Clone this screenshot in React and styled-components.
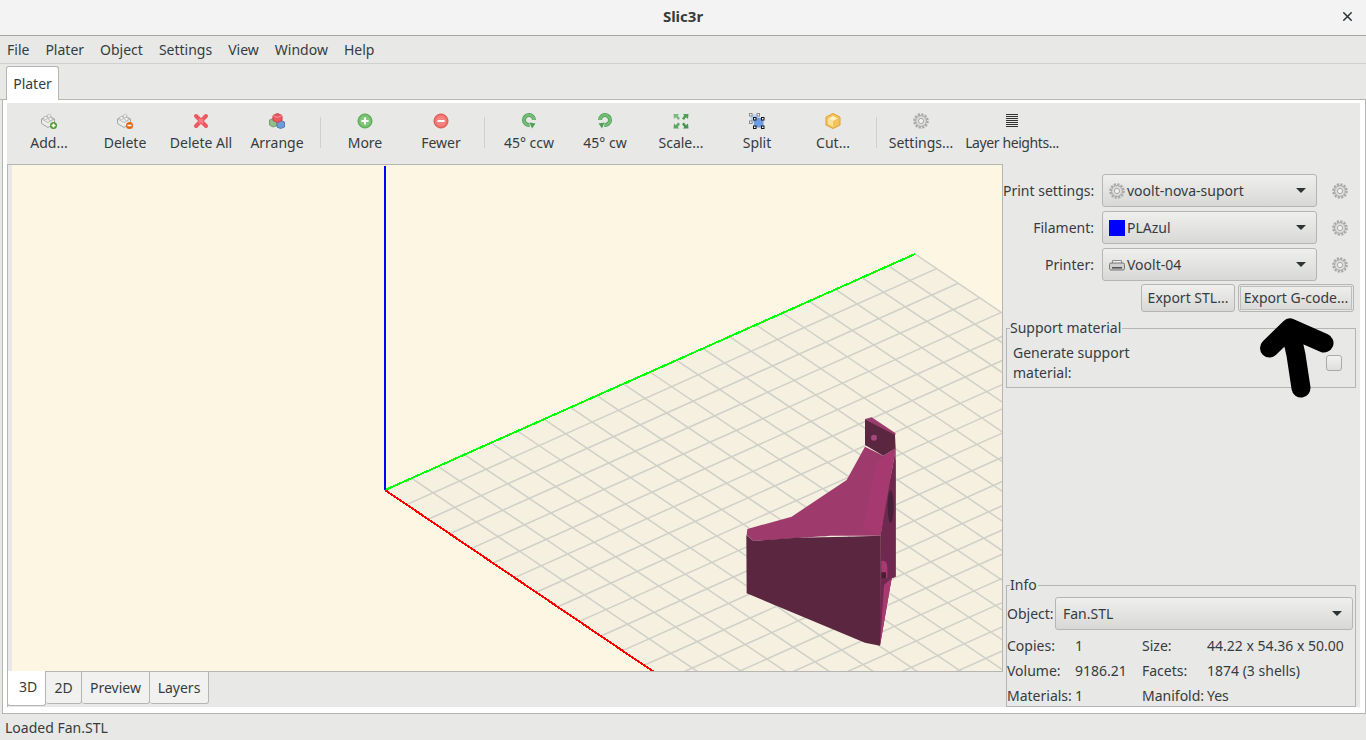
import React from 'react';
import styled, { createGlobalStyle } from 'styled-components';
import { X } from 'lucide-react';

const GlobalStyle = createGlobalStyle`
    html, body {
        margin: 0;
        padding: 0;
        background: #e8e8e7;
        overflow: hidden;
    }
    * {
        box-sizing: border-box;
    }
`;

const Window = styled.div`
    position: relative;
    width: 1366px;
    height: 740px;
    overflow: hidden;
    display: flex;
    flex-direction: column;
    background: #e8e8e7;
    color: #363c3e;
    font-family: "Noto Sans", sans-serif;
    font-size: 14px;
`;
const TitleBar = styled.div`
    height: 36px;
    flex: none;
    display: grid;
    grid-template-columns: 1fr auto 1fr;
    align-items: center;
    background: #f3f3f3;
    border-bottom: 1px solid #a3a3a0;
`;
const Title = styled.span`
    grid-column: 2;
    font-size: 15px;
    font-weight: 700;
    margin-top: -3px;
`;
const CloseBox = styled.div`
    justify-self: end;
    display: flex;
    margin: -3px 11px 0 0;
`;
const MenuBar = styled.div`
    height: 28px;
    flex: none;
    display: flex;
    align-items: center;
    gap: 16px;
    padding: 0 0 1px 7px;
    border-bottom: 1px solid #d0d0ce;
`;
const MenuItem = styled.span`
    color: inherit;
`;
const TabHead = styled.div`
    height: 36px;
    flex: none;
    display: flex;
    align-items: flex-end;
    padding-left: 6px;
    border-bottom: 1px solid #b5b5b3;
`;
const TopTab = styled.div`
    width: 53px;
    height: 34px;
    margin-bottom: -1px;
    display: flex;
    align-items: center;
    justify-content: center;
    background: #ffffff;
    border: 1px solid #b5b5b3;
    border-bottom: none;
    border-radius: 3px 3px 0 0;
`;
const Notebook = styled.div`
    height: 614px;
    flex: none;
    margin-left: 2px;
    padding: 3px 5px 6px 4px;
    display: flex;
    flex-direction: column;
    background: #ffffff;
    border: 1px solid #b5b5b3;
    border-top: none;
`;
const StatusBar = styled.div`
    flex: 1;
    display: flex;
    align-items: center;
    padding-left: 5px;
`;
const Panel = styled.div`
    flex: 1;
    min-height: 0;
    display: flex;
    flex-direction: column;
    background: #e8e8e7;
`;
const Toolbar = styled.div`
    height: 61px;
    flex: none;
    display: flex;
    padding-left: 4px;
`;
const ToolButton = styled.div`
    width: ${(p) => p.$width || 76}px;
    flex: none;
    display: flex;
    flex-direction: column;
    align-items: center;
    padding-top: 10px;
`;
const ToolIcon = styled.div`
    width: 16px;
    height: 16px;
    display: flex;
    align-items: center;
    justify-content: center;
`;
const ToolLabel = styled.span`
    line-height: 20px;
    margin-top: 4px;
    white-space: nowrap;
    letter-spacing: ${(p) => p.$spacing || 0}px;
`;
const ToolSeparator = styled.div`
    width: 1px;
    height: 31px;
    flex: none;
    margin: 14px 6px 0 5px;
    background: #cfcfcd;
`;
const Main = styled.div`
    flex: 1;
    min-height: 0;
    display: flex;
`;
const ViewColumn = styled.div`
    width: 996px;
    flex: none;
    display: flex;
    flex-direction: column;
    border-top: 1px solid #b5b5b3;
    border-left: 1px solid #b5b5b3;
`;
const CanvasFrame = styled.div`
    height: 507px;
    flex: none;
    padding-left: 4px;
    border-right: 1px solid #b5b5b3;
    border-bottom: 1px solid #b5b5b3;
`;
const Canvas = styled.svg`
    display: block;
    width: 990px;
    height: 506px;
    background: #fdf6e3;
`;
const ViewTabs = styled.div`
    display: flex;
    align-items: flex-start;
    margin: -1px 0 0 -1px;
`;
const ViewTab = styled.div`
    height: ${(p) => (p.$active ? 35 : 33)}px;
    width: ${(p) => p.$width}px;
    display: flex;
    align-items: center;
    justify-content: center;
    padding: ${(p) => (p.$active ? '0 0 3px 3px' : '0 0 1px 0')};
    background: ${(p) => (p.$active ? '#ffffff' : '#f1f1f0')};
    border: 1px solid #b5b5b3;
    border-top: ${(p) => (p.$active ? 'none' : '1px solid #b5b5b3')};
    border-left: ${(p) => (p.$active ? '1px solid #b5b5b3' : 'none')};
    border-radius: 0 0 3px 3px;
`;
const Sidebar = styled.div`
    flex: 1;
    min-width: 0;
    display: flex;
    flex-direction: column;
    padding-top: 10px;
`;
const PresetRow = styled.div`
    display: grid;
    grid-template-columns: 99px 215px 1fr;
    align-items: center;
    margin-bottom: 4px;
`;
const PresetLabel = styled.span`
    text-align: right;
    white-space: nowrap;
    padding-right: 8px;
`;
const Combo = styled.div`
    height: 33px;
    display: flex;
    align-items: center;
    gap: 2px;
    padding: 0 10px 0 6px;
    background: linear-gradient(#efefee, #d8d8d6);
    border: 1px solid #b5b5b3;
    border-radius: 3px;
`;
const ComboText = styled.span`
    flex: 1;
    white-space: nowrap;
    padding-left: ${(p) => p.$pad || 0}px;
`;
const Caret = styled.span`
    width: 0;
    height: 0;
    border-left: 5px solid transparent;
    border-right: 5px solid transparent;
    border-top: 5px solid #2e3436;
`;
const Swatch = styled.span`
    width: 16px;
    height: 16px;
    flex: none;
    background: ${(p) => p.$color};
`;
const GearSlot = styled.div`
    display: flex;
    justify-content: center;
    width: 16px;
    margin-left: 15px;
`;
const ExportRow = styled.div`
    display: flex;
    justify-content: flex-end;
    gap: 3px;
    margin-top: -1px;
    padding-right: 6px;
`;
const Button = styled.div`
    height: 28px;
    width: ${(p) => p.$width}px;
    display: flex;
    align-items: center;
    justify-content: center;
    padding-bottom: 1px;
    background: linear-gradient(#efefee, #d8d8d6);
    border: 1px solid #b5b5b3;
    border-radius: 3px;
    white-space: nowrap;
    box-shadow: ${(p) => (p.$focused ? 'inset 0 0 0 1px #e8e8e7, inset 0 0 0 2px #bdbdbb' : 'none')};
`;
const Group = styled.fieldset`
    margin: ${(p) => (p.$bottom ? 'auto 4px 0 3px' : '8px 4px 0 3px')};
    padding: ${(p) => p.$padding};
    min-width: 0;
    border: 1px solid #b5b5b3;
`;
const GroupTitle = styled.legend`
    padding: 0 1px 0 0;
    margin-left: 3px;
    line-height: 16px;
`;
const SupportRow = styled.div`
    display: flex;
    align-items: center;
    justify-content: space-between;
    padding: 0 13px 0 6px;
`;
const SupportText = styled.span`
    width: 130px;
    line-height: 20px;
`;
const CheckBox = styled.div`
    width: 16px;
    height: 16px;
    background: linear-gradient(#f2f2f1, #dededc);
    border: 1px solid #a9a9a7;
    border-radius: 3px;
`;
const ObjectRow = styled.div`
    display: grid;
    grid-template-columns: 48px 1fr;
    align-items: center;
    padding-right: 2px;
`;
const InfoGrid = styled.div`
    display: grid;
    grid-template-columns: 68px 67px 65px 1fr;
    grid-auto-rows: 20px;
    row-gap: 5px;
    align-items: center;
    margin-top: 5px;
    white-space: nowrap;
`;
const Arrow = styled.svg`
    position: absolute;
    left: 1250px;
    top: 310px;
    pointer-events: none;
`;
const Icon = styled.svg`
    display: block;
    flex: none;
`;

const plateGrid = () => {
  const green = [26.5, -11.8];
  const red = [21.6, 14.6];
  const origin = [385, 490];
  const lines = [];
  for (let k = 1; k <= 20; k++) {
    const px = origin[0] + red[0] * k;
    const py = origin[1] + red[1] * k;
    lines.push(`M${px} ${py}L${px + green[0] * 20} ${py + green[1] * 20}`);
    const qx = origin[0] + green[0] * k;
    const qy = origin[1] + green[1] * k;
    lines.push(`M${qx} ${qy}L${qx + red[0] * 20} ${qy + red[1] * 20}`);
  }
  return lines.join('');
};

const Brick = ({ badge, sign }) => (
  <Icon width="16" height="16" viewBox="0 0 16 16">
    <path d="M0.5 6L7 2.5L13.5 6V10.5L7 14.5L0.5 10.5Z" fill="#ececeb" stroke="#a5a5a3" />
    <path d="M0.5 6L7 9.5L13.5 6" fill="none" stroke="#bdbdbb" />
    <ellipse cx="4.5" cy="5" rx="2" ry="1.4" fill="#fafafa" stroke="#a5a5a3" strokeWidth="0.7" />
    <ellipse cx="8" cy="3" rx="2" ry="1.4" fill="#fafafa" stroke="#a5a5a3" strokeWidth="0.7" />
    <ellipse cx="9.5" cy="6" rx="2" ry="1.4" fill="#fafafa" stroke="#a5a5a3" strokeWidth="0.7" />
    <circle cx="12.5" cy="12.5" r="3.5" fill={badge} />
    <path d={sign} stroke="#ffffff" strokeWidth="1.6" />
  </Icon>
);

const CrossIcon = () => (
  <Icon width="16" height="16" viewBox="0 0 16 16">
    <path d="M3 3L13 13M13 3L3 13" stroke="#f0575f" strokeWidth="4" strokeLinecap="round" />
    <path d="M6 6L10 10M10 6L6 10" stroke="#f58288" strokeWidth="2" />
  </Icon>
);

const ArrangeIcon = () => (
  <Icon width="16" height="16" viewBox="0 0 16 16">
    <path d="M0.5 7L5 5L8 7V12.5L4 14L0.5 12Z" fill="#8fbf8a" stroke="#6f9f6a" />
    <path d="M8 9L12 7.5L15.5 9V14L11.5 15.5L8 14Z" fill="#6c9bd6" stroke="#4c7bb6" />
    <path d="M4 2.5L8.5 0.5L13 2.5V7.5L8.5 9.5L4 7.5Z" fill="#ea5a60" stroke="#c9434a" />
    <path d="M4 2.5L8.5 4.5L13 2.5" fill="none" stroke="#f79a9d" />
  </Icon>
);

const RoundIcon = ({ fill, edge, sign }) => (
  <Icon width="16" height="16" viewBox="0 0 16 16">
    <circle cx="8" cy="8" r="7" fill={fill} stroke={edge} />
    <circle cx="8" cy="8" r="5" fill="#ffffff" fillOpacity="0.15" />
    <path d={sign} stroke="#ffffff" strokeWidth="2" />
  </Icon>
);

const RotateIcon = ({ flip }) => (
  <Icon width="16" height="16" viewBox="0 0 16 16">
    <g transform={flip ? 'translate(16 0) scale(-1 1)' : undefined}>
      <path d="M13 7A5 5 0 1 0 8.5 12" fill="none" stroke="#4f9f55" strokeWidth="4" />
      <path d="M13 7A5 5 0 1 0 8.5 12" fill="none" stroke="#74bd78" strokeWidth="2.4" />
      <path d="M8.5 9.5L14.5 10.5L11 15.5Z" fill="#4f9f55" />
    </g>
  </Icon>
);

const ScaleIcon = () => (
  <Icon width="16" height="16" viewBox="0 0 16 16">
    <path d="M0.5 1H6L4.8 2.6L7 5.4L5 7L3 4.2L1 6Z" fill="#7dbb80" />
    <path d="M15.5 1H10L11.2 2.6L9 5.4L11 7L13 4.2L15 6Z" fill="#4f9f55" />
    <path d="M0.5 15.5H6L4.8 13.9L7 11L5 9.5L3 12.2L1 10.5Z" fill="#5aa860" />
    <path d="M15.5 15.5H10L11.2 13.9L9 11L11 9.5L13 12.2L15 10.5Z" fill="#4a9350" />
  </Icon>
);

const SplitIcon = () => (
  <Icon width="16" height="16" viewBox="0 0 16 16">
    <rect x="1.5" y="1.5" width="9" height="9" fill="#b7cff0" />
    <rect x="5" y="5" width="9.5" height="9.5" fill="#6f9ce0" />
    <g fill="#ffffff" stroke="#8a8a8a">
      <rect x="0.5" y="0.5" width="2.5" height="2.5" />
      <rect x="8" y="0.5" width="2.5" height="2.5" />
      <rect x="0.5" y="8" width="2.5" height="2.5" />
    </g>
    <g fill="#ffffff" stroke="#111111">
      <rect x="4.5" y="4.5" width="2.5" height="2.5" />
      <rect x="12.5" y="4.5" width="2.5" height="2.5" />
      <rect x="4.5" y="13" width="2.5" height="2.5" />
      <rect x="12.5" y="13" width="2.5" height="2.5" />
    </g>
  </Icon>
);

const CutIcon = () => (
  <Icon width="16" height="16" viewBox="0 0 16 16">
    <path d="M8 0.5L15 4V12L8 15.5L1 12V4Z" fill="#f3c35c" stroke="#e0a030" />
    <path d="M8 3L12.5 5.5L8 8L3.5 5.5Z" fill="#fff0c4" />
    <path d="M8 8V13.5L3 11V5.5Z" fill="#fbe29a" />
  </Icon>
);

const LayersIcon = () => (
  <Icon width="16" height="16" viewBox="0 0 16 16">
    <path d="M2 1.5H14M2 3.5H14M2 5.5H14M2 7.5H14M2 9.5H14M2 11.5H14M2 13.5H14" stroke="#333333" />
  </Icon>
);

const PrinterIcon = () => (
  <Icon width="16" height="16" viewBox="0 0 16 16">
    <path d="M3.5 6V3.5H12.5V6" fill="#f2f2f2" stroke="#8c8c8c" />
    <rect x="0.5" y="6" width="15" height="7" rx="1.5" fill="#cfcfcf" stroke="#777777" />
    <rect x="3" y="10" width="10" height="1.6" fill="#555555" />
  </Icon>
);

// teeth are a dashed ring under the body of the gear
const Gear = () => (
  <Icon width="16" height="16" viewBox="0 0 16 16">
    <circle cx="8" cy="8" r="6.6" fill="none" stroke="#a9a9a7" strokeWidth="2.4" strokeDasharray="2.2 1.26" />
    <circle cx="8" cy="8" r="5.4" fill="#dcdcda" stroke="#a9a9a7" />
    <circle cx="8" cy="8" r="2.6" fill="#f1f1f0" stroke="#a9a9a7" />
  </Icon>
);

const tools = [
  [{ label: 'Add...', icon: <Brick badge="#4c9a2a" sign="M12.5 10.5V14.5M10.5 12.5H14.5" /> },
   { label: 'Delete', icon: <Brick badge="#e2620f" sign="M10.5 12.5H14.5" /> },
   { label: 'Delete All', icon: <CrossIcon /> },
   { label: 'Arrange', icon: <ArrangeIcon /> }],
  [{ label: 'More', icon: <RoundIcon fill="#6fbf6a" edge="#55a550" sign="M8 4.5V11.5M4.5 8H11.5" /> },
   { label: 'Fewer', icon: <RoundIcon fill="#f0706a" edge="#d9534f" sign="M4.5 8H11.5" /> }],
  [{ label: '45° ccw', icon: <RotateIcon /> },
   { label: '45° cw', icon: <RotateIcon flip /> },
   { label: 'Scale...', icon: <ScaleIcon /> },
   { label: 'Split', icon: <SplitIcon /> },
   { label: 'Cut...', icon: <CutIcon /> }],
  [{ label: 'Settings...', icon: <Gear /> },
   { label: 'Layer heights...', icon: <LayersIcon />, width: 106, spacing: -0.4 }],
];

const menus = ['File', 'Plater', 'Object', 'Settings', 'View', 'Window', 'Help'];

const infoRows = [
  ['Copies:', '1', 'Size:', '44.22 x 54.36 x 50.00'],
  ['Volume:', '9186.21', 'Facets:', '1874 (3 shells)'],
  ['Materials:', '1', 'Manifold:', 'Yes'],
];

const Scene = () => (
  <Canvas viewBox="12 165 990 506">
    <path d="M385 490L915 254L1347 546L817 782Z" fill="#f5f0df" />
    <path d={plateGrid()} fill="none" stroke="#cfd0c8" strokeWidth="1.5" />
    <g shapeRendering="crispEdges" strokeWidth="2">
      <path d="M385 166V490" stroke="#0000ff" />
      <path d="M385 490L915 254" stroke="#00ff00" />
      <path d="M385 490L654 672" stroke="#ff0000" />
    </g>
    <g transform="translate(730 405) scale(0.3333)">
      <path d="M497 130L497 515L485 520L450 722L452 392Z" fill="#7a2c54" />
      <path d="M497 160L470 260L452 392L450 722L462 620L485 520L497 515Z" fill="#70294e" />
      <path d="M485 520L450 722L462 540Z" fill="#a83a72" />
      <ellipse cx="482" cy="305" rx="9" ry="48" fill="#47203a" />
      <path d="M454 468Q472 462 472 490V520H454Z" fill="#a83a72" />
      <path d="M454 502H468V520H454Z" fill="#4a1d33" />
      <path d="M52 372L185 335L350 225L405 125L460 152L497 130L452 392L300 392L70 408L50 390Z" fill="#9e3a6c" />
      <path d="M440 170L497 130L450 390L400 370Z" fill="#a63a70" />
      <path d="M49 390L70 408L200 398L350 395L452 392L450 722L405 713L50 565Z" fill="#5a2640" />
      <path d="M405 42L425 37L497 85L495 92Z" fill="#9e3a6c" />
      <path d="M405 42L495 90L497 130L460 152L405 120Z" fill="#5a2640" />
      <circle cx="432" cy="98" r="9" fill="#a6487c" />
    </g>
  </Canvas>
);

const App = () => {
  return (
    <Window>
      <GlobalStyle />
      <TitleBar>
        <Title>Slic3r</Title>
        <CloseBox><X size={15} strokeWidth={2.4} color="#2e3436" /></CloseBox>
      </TitleBar>
      <MenuBar>
        {menus.map((m) => <MenuItem key={m}>{m}</MenuItem>)}
      </MenuBar>
      <TabHead><TopTab>Plater</TopTab></TabHead>
      <Notebook>
        <Panel>
          <Toolbar>
            {tools.map((group, i) => (
              <React.Fragment key={i}>
                {i > 0 && <ToolSeparator />}
                {group.map((t) => (
                  <ToolButton key={t.label} $width={t.width}>
                    <ToolIcon>{t.icon}</ToolIcon>
                    <ToolLabel $spacing={t.spacing}>{t.label}</ToolLabel>
                  </ToolButton>
                ))}
              </React.Fragment>
            ))}
          </Toolbar>
          <Main>
            <ViewColumn>
              <CanvasFrame><Scene /></CanvasFrame>
              <ViewTabs>
                <ViewTab $active $width={39}>3D</ViewTab>
                <ViewTab $width={36}>2D</ViewTab>
                <ViewTab $width={68}>Preview</ViewTab>
                <ViewTab $width={59}>Layers</ViewTab>
              </ViewTabs>
            </ViewColumn>
            <Sidebar>
              <PresetRow>
                <PresetLabel>Print settings:</PresetLabel>
                <Combo><Gear /><ComboText>voolt-nova-suport</ComboText><Caret /></Combo>
                <GearSlot><Gear /></GearSlot>
              </PresetRow>
              <PresetRow>
                <PresetLabel>Filament:</PresetLabel>
                <Combo><Swatch $color="#0000ff" /><ComboText>PLAzul</ComboText><Caret /></Combo>
                <GearSlot><Gear /></GearSlot>
              </PresetRow>
              <PresetRow>
                <PresetLabel>Printer:</PresetLabel>
                <Combo><PrinterIcon /><ComboText>Voolt-04</ComboText><Caret /></Combo>
                <GearSlot><Gear /></GearSlot>
              </PresetRow>
              <ExportRow>
                <Button $width={94}>Export STL...</Button>
                <Button $width={116} $focused>Export G-code...</Button>
              </ExportRow>
              <Group $padding="7px 0 4px 0">
                <GroupTitle>Support material</GroupTitle>
                <SupportRow>
                  <SupportText>Generate support material:</SupportText>
                  <CheckBox />
                </SupportRow>
              </Group>
              <Group $bottom $padding="4px 0 1px 0">
                <GroupTitle>Info</GroupTitle>
                <ObjectRow>
                  <span>Object:</span>
                  <Combo><ComboText $pad={1}>Fan.STL</ComboText><Caret /></Combo>
                </ObjectRow>
                <InfoGrid>
                  {infoRows.flat().map((cell, i) => <span key={i}>{cell}</span>)}
                </InfoGrid>
              </Group>
            </Sidebar>
          </Main>
        </Panel>
      </Notebook>
      <StatusBar>Loaded Fan.STL</StatusBar>
      <Arrow width="100" height="95" viewBox="0 0 100 95">
        <path d="M19.5 38L40 18L74 33M40 18L46 45L51 78" fill="none" stroke="#000000" strokeWidth="19" strokeLinecap="round" strokeLinejoin="round" />
      </Arrow>
    </Window>
  );
};

export default App;
